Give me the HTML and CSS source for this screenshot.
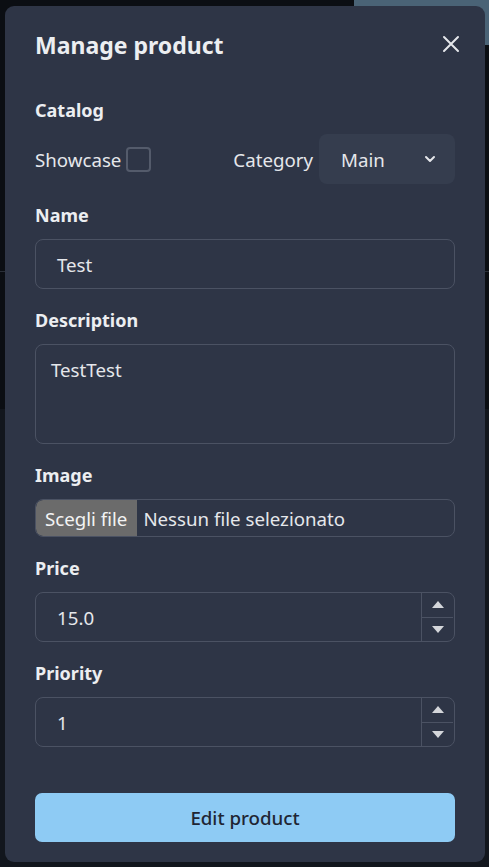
FILE: index.html
```html
<!DOCTYPE html>
<html lang="en">
<head>
<meta charset="utf-8">
<title>Manage product</title>
<link rel="stylesheet" href="styles.css">
</head>
<body>
<div class="backdrop">
  <div class="bg-top"><div class="bg-btn"></div></div>
  <div class="bg-mid"></div>
  <div class="bg-low"></div>
</div>

<div class="modal">
  <div class="head">
    <h2 class="title">Manage product</h2>
    <button class="close" aria-label="Close">
      <svg width="18" height="18" viewBox="0 0 18 18"><path d="M2 2 L16 16 M16 2 L2 16" stroke="#e5e7eb" stroke-width="2" stroke-linecap="round" fill="none"/></svg>
    </button>
  </div>

  <div class="group">
    <div class="label">Catalog</div>
    <div class="catalog-row">
      <label class="showcase">Showcase <span class="check"></span></label>
      <div class="cat">
        <span class="cat-label">Category</span>
        <div class="select">
          <span>Main</span>
          <svg width="14" height="14" viewBox="0 0 14 14"><path d="M3 5 L7 9 L11 5" stroke="#e5e7eb" stroke-width="2" fill="none" stroke-linecap="round" stroke-linejoin="round"/></svg>
        </div>
      </div>
    </div>
  </div>

  <div class="group">
    <div class="label">Name</div>
    <div class="input">Test</div>
  </div>

  <div class="group">
    <div class="label">Description</div>
    <div class="textarea">TestTest</div>
  </div>

  <div class="group">
    <div class="label">Image</div>
    <div class="file">
      <span class="file-btn">Scegli file</span>
      <span class="file-name">Nessun file selezionato</span>
    </div>
  </div>

  <div class="group">
    <div class="label">Price</div>
    <div class="numbox">
      <span class="num-value">15.0</span>
      <div class="spin">
        <div class="spin-half"><svg width="14" height="9" viewBox="0 0 14 9"><path d="M7 1 L13 8 L1 8 Z" fill="#d4d6da"/></svg></div>
        <div class="spin-half spin-down"><svg width="14" height="9" viewBox="0 0 14 9"><path d="M1 1 L13 1 L7 8 Z" fill="#d4d6da"/></svg></div>
      </div>
    </div>
  </div>

  <div class="group">
    <div class="label">Priority</div>
    <div class="numbox">
      <span class="num-value">1</span>
      <div class="spin">
        <div class="spin-half"><svg width="14" height="9" viewBox="0 0 14 9"><path d="M7 1 L13 8 L1 8 Z" fill="#d4d6da"/></svg></div>
        <div class="spin-half spin-down"><svg width="14" height="9" viewBox="0 0 14 9"><path d="M1 1 L13 1 L7 8 Z" fill="#d4d6da"/></svg></div>
      </div>
    </div>
  </div>

  <button class="submit">Edit product</button>
</div>
</body>
</html>
```

FILE: styles.css
```css
* { box-sizing: border-box; }
html, body { margin: 0; padding: 0; }
body {
  width: 489px;
  height: 867px;
  overflow: hidden;
  background: #0b0e13;
  font-family: "Noto Sans", "Open Sans", sans-serif;
  color: #e5e7eb;
}
.backdrop { height: 867px; display: flex; flex-direction: column; }
.bg-top { height: 272px; border-bottom: 1px solid #2a2f38; display: flex; justify-content: flex-end; }
.bg-btn { width: 135px; height: 45px; background: #4a6376; border-radius: 0 0 0 8px; }
.bg-mid { height: 137px; }
.bg-low { flex: 1; background: #12161d; }

.modal {
  position: fixed;
  left: 5px;
  top: 6px;
  width: 480px;
  height: 856px;
  background: #2e3546;
  border-radius: 9px;
  padding: 23px 30px 0 30px;
  display: flex;
  flex-direction: column;
}
.head { display: flex; justify-content: space-between; align-items: flex-start; height: 67px; }
.title { margin: 0; font-size: 23px; line-height: 32px; font-weight: 700; color: #eceef1; }
.close { background: none; border: none; padding: 0; margin: 0 -11px 0 0; width: 30px; height: 30px; display: flex; align-items: center; justify-content: center; cursor: pointer; }

.group { display: flex; flex-direction: column; gap: 10px; margin-bottom: 17px; }
.label { font-size: 18px; line-height: 28px; font-weight: 700; color: #eceef1; }

.catalog-row { display: flex; justify-content: space-between; align-items: center; height: 50px; }
.showcase { display: flex; align-items: center; gap: 5px; font-size: 18.7px; }
.check { width: 25px; height: 25px; border: 2px solid #545b6b; border-radius: 4px; display: inline-block; }
.cat { display: flex; align-items: center; gap: 6px; font-size: 18.7px; }
.select {
  width: 136px; height: 50px; background: #353d4e; border-radius: 8px;
  display: flex; align-items: center; justify-content: space-between;
  padding: 0 18px 0 22px; font-size: 18.7px;
}

.input, .numbox, .textarea, .file {
  border: 1px solid #4b5263;
  border-radius: 8px;
  font-size: 18.7px;
  color: #e5e7eb;
}
.input { height: 50px; display: flex; align-items: center; padding-left: 21px; }
.textarea { height: 100px; padding: 11px 15px; line-height: 27px; }
.file { height: 38px; display: flex; align-items: stretch; overflow: hidden; }
.file-btn { background: #6b6b6b; color: #f3f3f3; padding: 0 10px 0 9px; display: flex; align-items: center; border-radius: 7px 0 0 7px; }
.file-name { display: flex; align-items: center; padding-left: 6px; }

.numbox { height: 50px; display: flex; align-items: stretch; }
.num-value { flex: 1; display: flex; align-items: center; padding-left: 21px; }
.spin { width: 32px; border-left: 1px solid #4b5263; display: flex; flex-direction: column; margin-right: 1px; }
.spin-half { flex: 1; display: flex; align-items: center; justify-content: center; }
.spin-down { border-top: 1px solid #4b5263; }

.submit {
  margin-top: 29px;
  height: 49px;
  width: 100%;
  border: none;
  border-radius: 7px;
  background: #8ecbf4;
  color: #1f2633;
  font-family: "Noto Sans", "Open Sans", sans-serif;
  font-size: 18.7px;
  font-weight: 500;
}
```
